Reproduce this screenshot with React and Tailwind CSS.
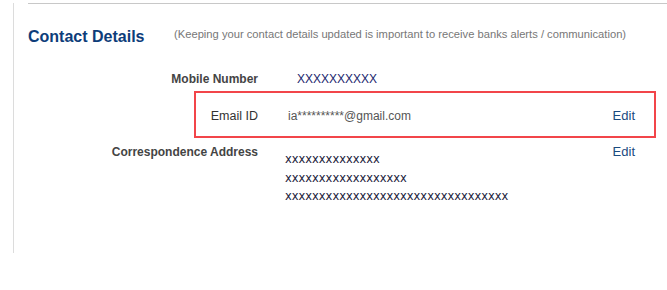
export default function App() {
  const arial = { fontFamily: '"Liberation Sans", Arial, sans-serif' }
  return (
    <div className="w-[667px] h-[290px] bg-white overflow-hidden" style={arial}>
      <div className="ml-[13px] h-[250px] border-l border-[#dcdcdc]">
        <div className="mt-[3px] ml-[14px] border-t border-[#c8c8c8]">
          <div className="flex items-start pt-[22.5px]">
            <h2 className="w-[146px] text-[16px] leading-[20px] font-bold text-[#0d3d7a] whitespace-nowrap">Contact Details</h2>
            <p className="text-[11.2px] leading-[14px] text-[#777] whitespace-nowrap">
              (Keeping your contact details updated is important to receive banks alerts / communication)
            </p>
          </div>
        </div>

        <div className="ml-[14px]">
          <div className="flex items-start mt-[24px] h-[16px]">
            <div className="w-[230px] text-right text-[12px] leading-[16px] font-bold text-[#444] whitespace-nowrap">Mobile Number</div>
            <div className="ml-[39px] text-[12px] leading-[16px] text-[#1b1f6e]">XXXXXXXXXX</div>
          </div>

          <div className="ml-[166px] mt-[4.5px] w-[462px] h-[47px] border-2 border-[#f2454a] flex items-center pt-[2px]">
            <div className="w-[62px] text-right text-[12.5px] leading-[16px] text-[#333] whitespace-nowrap">Email ID</div>
            <div className="ml-[30px] text-[12px] leading-[16px] text-[#555]">ia**********@gmail.com</div>
            <button className="ml-auto mr-[19px] text-[13px] leading-[16px] text-[#1a4a80]">Edit</button>
          </div>

          <div className="flex items-start mt-[6.3px] w-[607px]">
            <div className="w-[230px] text-right text-[12px] leading-[16px] font-bold text-[#444] whitespace-nowrap">Correspondence Address</div>
            <div
              className="ml-[27px] mt-[6px] flex flex-col text-[11.45px] leading-[18.3px] text-[#1a1a3a]"
              style={{ fontFamily: '"DejaVu Sans", Verdana, sans-serif' }}
            >
              <span>xxxxxxxxxxxxxx</span>
              <span>xxxxxxxxxxxxxxxxxx</span>
              <span>xxxxxxxxxxxxxxxxxxxxxxxxxxxxxxxxx</span>
            </div>
            <button className="ml-auto text-[13px] leading-[16px] text-[#1a4a80]">Edit</button>
          </div>
        </div>
      </div>
    </div>
  )
}
